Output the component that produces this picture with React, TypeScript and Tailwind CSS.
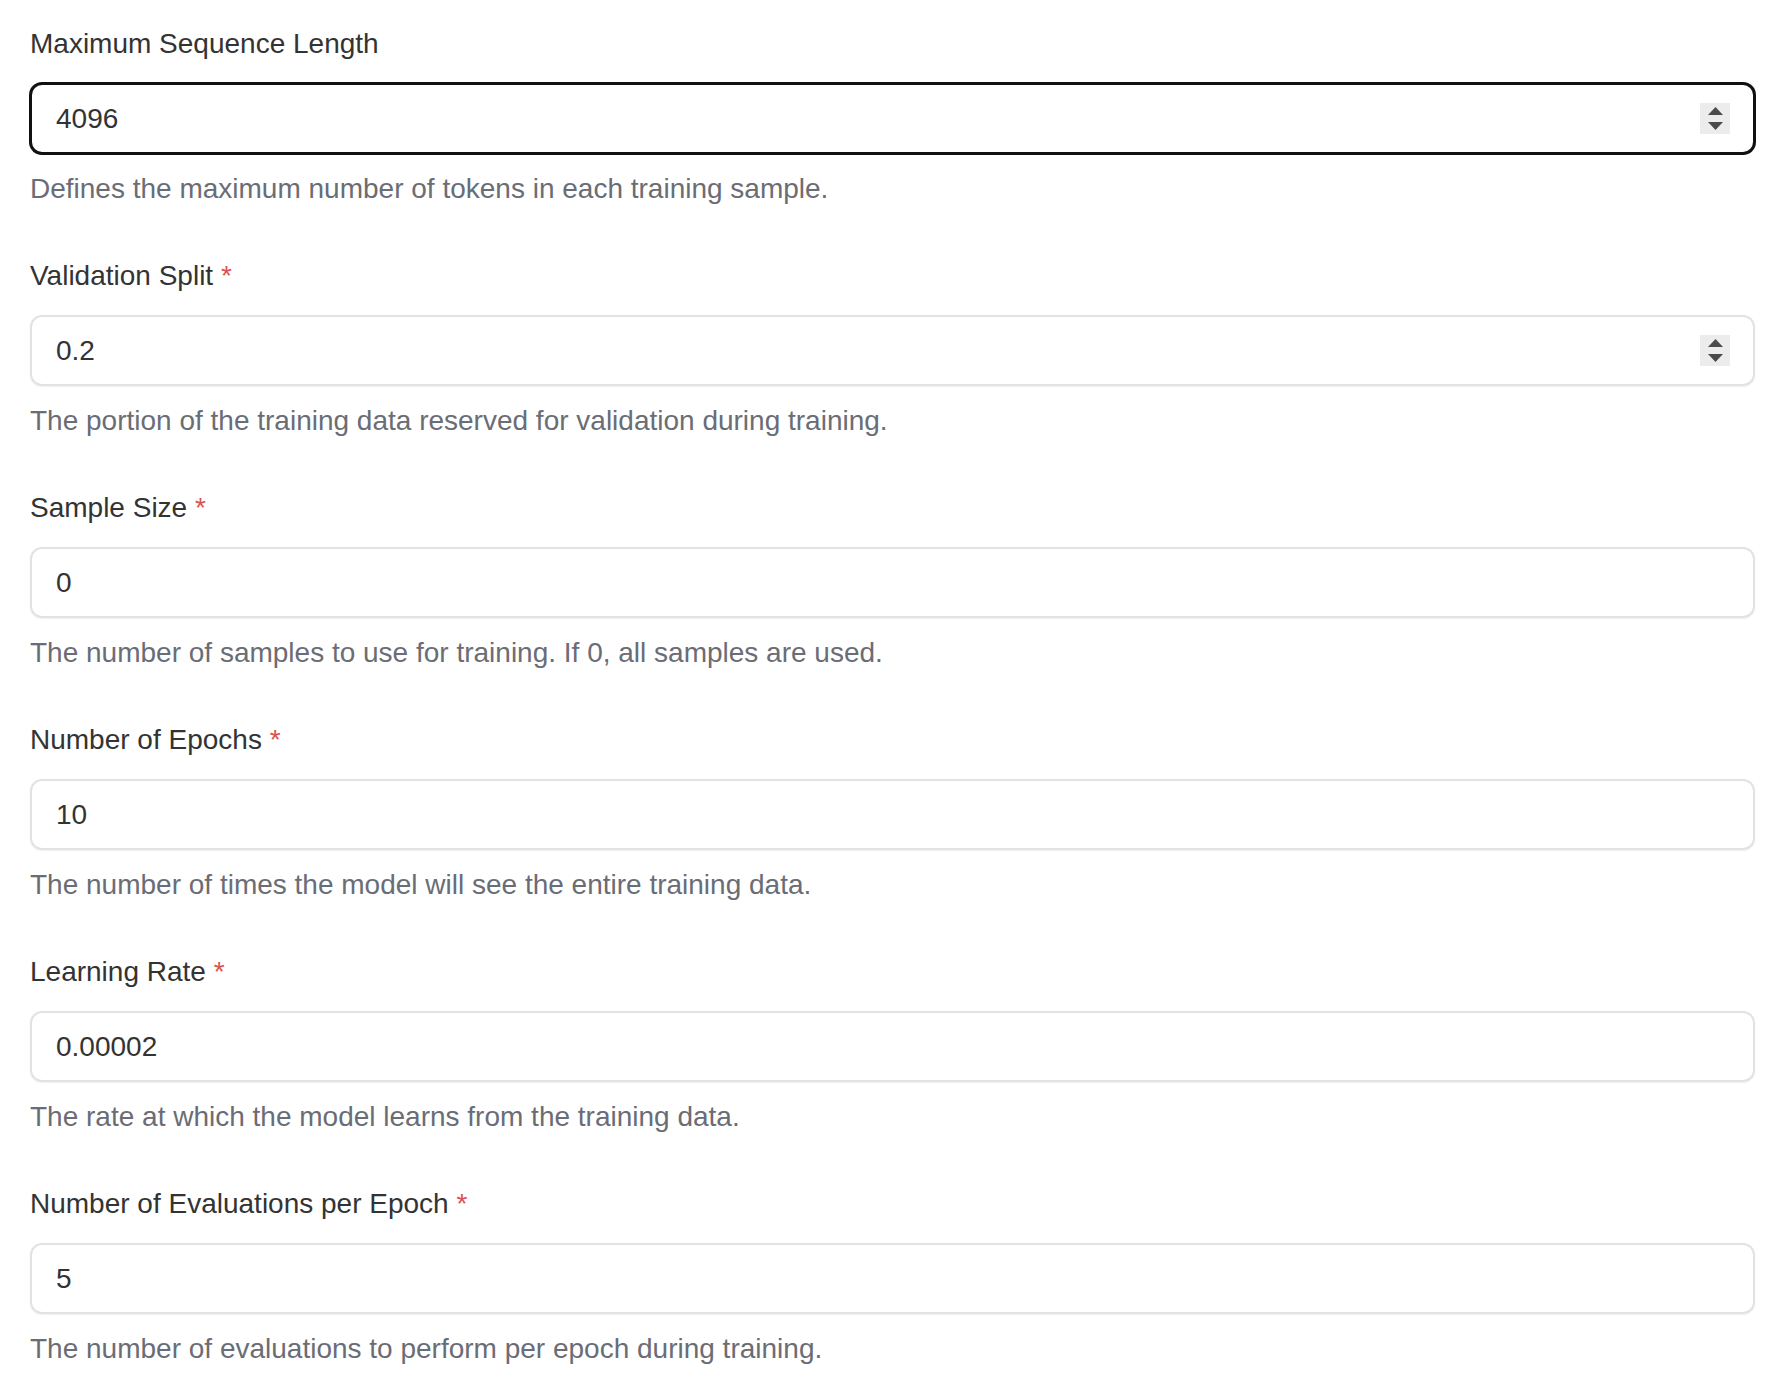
import React from 'react';

type Field = {
  label: string;
  value: string;
  help: string;
  required?: boolean;
  spinner?: boolean;
  focused?: boolean;
};

const fields: Field[] = [
  {
    label: 'Maximum Sequence Length',
    value: '4096',
    help: 'Defines the maximum number of tokens in each training sample.',
    spinner: true,
    focused: true,
  },
  {
    label: 'Validation Split',
    value: '0.2',
    help: 'The portion of the training data reserved for validation during training.',
    required: true,
    spinner: true,
  },
  {
    label: 'Sample Size',
    value: '0',
    help: 'The number of samples to use for training. If 0, all samples are used.',
    required: true,
  },
  {
    label: 'Number of Epochs',
    value: '10',
    help: 'The number of times the model will see the entire training data.',
    required: true,
  },
  {
    label: 'Learning Rate',
    value: '0.00002',
    help: 'The rate at which the model learns from the training data.',
    required: true,
  },
  {
    label: 'Number of Evaluations per Epoch',
    value: '5',
    help: 'The number of evaluations to perform per epoch during training.',
    required: true,
  },
];

function Spinner() {
  return (
    <div className="w-[30px] h-[31px] bg-[#ececec] flex flex-col items-center justify-center gap-[7px]">
      <svg width="15" height="8" viewBox="0 0 15 8">
        <path d="M7.5 0 L15 8 L0 8 Z" fill="#4a4a4a" />
      </svg>
      <svg width="15" height="8" viewBox="0 0 15 8">
        <path d="M0 0 L15 0 L7.5 8 Z" fill="#4a4a4a" />
      </svg>
    </div>
  );
}

function FieldRow({ field }: { field: Field }) {
  return (
    <div className="flex flex-col mb-[47px]">
      {/* label */}
      <label className="h-[40px] leading-[40px] text-[28px] text-[#333333]">
        {field.label}
        {field.required && <span className="text-[#d9534f]"> *</span>}
      </label>

      {/* input box */}
      <div
        className={`mt-[19px] h-[71px] rounded-[12px] border-2 bg-white flex items-center justify-between pl-[24px] pr-[23px] ${
          field.focused
            ? 'border-[#111111] shadow-[0_0_0_1px_#111111]'
            : 'border-[#e2e2e2] shadow-[0_1px_2px_rgba(0,0,0,0.06)]'
        }`}
      >
        <span className="text-[28px] text-[#333333] leading-none">{field.value}</span>
        {field.spinner && <Spinner />}
      </div>

      {/* help */}
      <p className="mt-[15px] h-[40px] leading-[40px] text-[28px] text-[#6a6d75]">{field.help}</p>
    </div>
  );
}

export default function App() {
  return (
    <div
      className="min-h-screen bg-white px-[30px] pt-[24px] pr-[31px]"
      style={{ fontFamily: '"Liberation Sans", Arial, sans-serif' }}
    >
      {fields.map(f => (
        <FieldRow key={f.label} field={f} />
      ))}
    </div>
  );
}
